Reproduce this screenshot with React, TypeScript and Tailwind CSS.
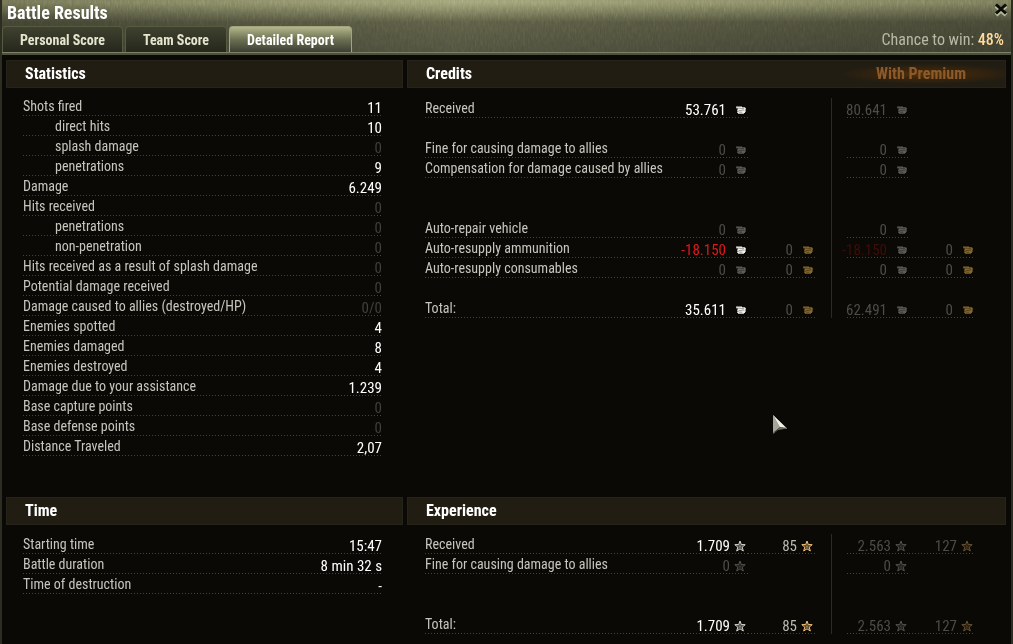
import React from "react";
import { clsx } from "clsx";

type Kind = "silver" | "gold" | "xp" | "freeXp";

type Amount = {
  value: string;
  kind: Kind;
  tone?: "bright" | "normal" | "dim" | "loss" | "dimLoss";
  lit?: boolean;
};

type Stat = { label: string; value: string; sub?: boolean; off?: boolean };

type LedgerRow = {
  label: string;
  main: Amount;
  extra?: Amount;
  premium: Amount;
  premiumExtra?: Amount;
};

const statistics: Stat[] = [
  { label: "Shots fired", value: "11" },
  { label: "direct hits", value: "10", sub: true },
  { label: "splash damage", value: "0", sub: true, off: true },
  { label: "penetrations", value: "9", sub: true },
  { label: "Damage", value: "6.249" },
  { label: "Hits received", value: "0", off: true },
  { label: "penetrations", value: "0", sub: true, off: true },
  { label: "non-penetration", value: "0", sub: true, off: true },
  { label: "Hits received as a result of splash damage", value: "0", off: true },
  { label: "Potential damage received", value: "0", off: true },
  { label: "Damage caused to allies (destroyed/HP)", value: "0/0", off: true },
  { label: "Enemies spotted", value: "4" },
  { label: "Enemies damaged", value: "8" },
  { label: "Enemies destroyed", value: "4" },
  { label: "Damage due to your assistance", value: "1.239" },
  { label: "Base capture points", value: "0", off: true },
  { label: "Base defense points", value: "0", off: true },
  { label: "Distance Traveled", value: "2,07" },
];

const time: Stat[] = [
  { label: "Starting time", value: "15:47" },
  { label: "Battle duration", value: "8 min 32 s" },
  { label: "Time of destruction", value: "-" },
];

const noSilver: Amount = { value: "0", kind: "silver", tone: "dim" };
const noGold: Amount = { value: "0", kind: "gold", tone: "dim" };

// null is an empty line between groups
const credits: (LedgerRow | null)[] = [
  {
    label: "Received",
    main: { value: "53.761", kind: "silver", tone: "bright", lit: true },
    premium: { value: "80.641", kind: "silver", tone: "dim" },
  },
  null,
  { label: "Fine for causing damage to allies", main: noSilver, premium: noSilver },
  { label: "Compensation for damage caused by allies", main: noSilver, premium: noSilver },
  null,
  null,
  { label: "Auto-repair vehicle", main: noSilver, premium: noSilver },
  {
    label: "Auto-resupply ammunition",
    main: { value: "-18.150", kind: "silver", tone: "loss", lit: true },
    extra: noGold,
    premium: { value: "-18.150", kind: "silver", tone: "dimLoss" },
    premiumExtra: noGold,
  },
  {
    label: "Auto-resupply consumables",
    main: noSilver,
    extra: noGold,
    premium: noSilver,
    premiumExtra: noGold,
  },
  null,
  {
    label: "Total:",
    main: { value: "35.611", kind: "silver", tone: "bright", lit: true },
    extra: noGold,
    premium: { value: "62.491", kind: "silver", tone: "dim" },
    premiumExtra: noGold,
  },
];

const xpAmounts = {
  main: { value: "1.709", kind: "xp", tone: "bright", lit: true },
  extra: { value: "85", kind: "freeXp", tone: "normal", lit: true },
  premium: { value: "2.563", kind: "xp", tone: "dim" },
  premiumExtra: { value: "127", kind: "freeXp", tone: "dim" },
} satisfies Record<string, Amount>;

const experience: (LedgerRow | null)[] = [
  { label: "Received", ...xpAmounts },
  {
    label: "Fine for causing damage to allies",
    main: { value: "0", kind: "xp", tone: "dim" },
    premium: { value: "0", kind: "xp", tone: "dim" },
  },
  null,
  null,
  { label: "Total:", ...xpAmounts },
];

const dotted =
  "bg-[repeating-linear-gradient(90deg,#44443c_0_1px,transparent_1px_3px)] bg-[length:100%_1px] bg-bottom bg-no-repeat";

const toneClass = {
  bright: "text-white",
  normal: "text-[#b9b9b0]",
  dim: "text-[#4c4c48]",
  loss: "text-[#e01a1a]",
  dimLoss: "text-[#3f0d09]",
};

const iconClass = {
  silver: ["text-[#5c5c58]", "text-[#f0f0ee]"],
  gold: ["text-[#86692a]", "text-[#e0b050]"],
  xp: ["text-[#54544f]", "text-[#d8d8d2]"],
  freeXp: ["text-[#6a5232]", "text-[#f8c47c]"],
};

const Coins = () => (
  <svg viewBox="0 0 10 10" className="h-2.5 w-2.5" fill="currentColor" aria-hidden="true">
    <path d="M0 1.500h6v.8h3.200v1H10v1.200h-.6V5.500h.4v1.200h-.8v1.200H8v.8H2V7.800H1V6.500h1.500V5.700H1V4.500h1V3.500H.5z" />
    <path d="M1.500 3.200H4l1 .4h3M3 5.500h2.500l1-.4h2M3.200 7.200h3" fill="none" stroke="#0a0a06" strokeOpacity=".6" strokeWidth=".6" />
  </svg>
);

const Star = () => (
  <svg viewBox="0 0 12 12" className="h-3 w-3" aria-hidden="true">
    <path
      d="m6 1 1.300 3.500 3.900.2-3 2.400 1.100 3.900L6 8.800 2.700 11l1.100-3.900-3-2.400 3.900-.2z"
      fill="currentColor"
      fillOpacity=".2"
      stroke="currentColor"
      strokeWidth="1"
    />
    <path d="M6 3.500v3M3.500 5.500 6 6.500l2.500-1M4.500 8.500 6 6.500l1.500 2" stroke="currentColor" strokeWidth=".4" fill="none" />
  </svg>
);

const AmountCell = ({ amount }: { amount?: Amount }) => {
  if (!amount) return <td />;
  const { value, kind, tone = "normal", lit } = amount;
  const star = kind === "xp" || kind === "freeXp";

  return (
    <td className={clsx("p-0 align-bottom", dotted)}>
      <div className={clsx("flex items-center justify-end pr-0.5", star ? "gap-1" : "gap-2.5")}>
        <span className={toneClass[tone]}>{value}</span>
        <span className={iconClass[kind][lit ? 1 : 0]}>{star ? <Star /> : <Coins />}</span>
      </div>
    </td>
  );
};

const PanelTitle = ({ children, premium }: { children: React.ReactNode; premium?: boolean }) => (
  <div className="flex h-7 items-center justify-between border border-[#26231a] bg-[#211d13] pl-[18px] text-[16px] font-bold text-white">
    <h2>{children}</h2>
    {premium && (
      <span className="flex h-full w-48 items-center justify-center bg-[radial-gradient(ellipse_at_60%_50%,#573408_0%,#3a250c_25%,#211d13_55%)] pl-6 text-[#8c5a2b]">
        With Premium
      </span>
    )}
  </div>
);

const RowLabel = ({ children, className }: { children: React.ReactNode; className?: string }) => (
  <th
    scope="row"
    className={clsx("p-0 pb-0.5 text-left align-bottom text-[14px] font-normal whitespace-nowrap text-[#c6c6be]", className)}
  >
    {children}
  </th>
);

const StatTable = ({ rows }: { rows: Stat[] }) => (
  <table className="w-full border-collapse leading-4">
    <tbody>
      {rows.map((row, i) => (
        <tr key={i} className={clsx("h-5", dotted)}>
          <RowLabel className={clsx(row.sub && "pl-8")}>{row.label}</RowLabel>
          <td className={clsx("p-0 text-right align-bottom", row.off ? "text-[#40403c]" : "text-white")}>
            {row.value}
          </td>
        </tr>
      ))}
    </tbody>
  </table>
);

const Ledger = ({ rows }: { rows: (LedgerRow | null)[] }) => (
  <table className="w-full table-fixed border-collapse leading-4">
    <colgroup>
      <col />
      <col className="w-16" />
      <col className="w-[67px]" />
      <col className="w-4" />
      <col className="w-4" />
      <col className="w-[62px]" />
      <col className="w-[66px]" />
    </colgroup>
    <tbody>
      {rows.map((row, i) => (
        <tr key={i} className="h-5">
          {row ? (
            <>
              <RowLabel className={dotted}>{row.label}</RowLabel>
              <AmountCell amount={row.main} />
              <AmountCell amount={row.extra} />
            </>
          ) : (
            <td colSpan={3} />
          )}
          <td />
          <td className="border-l border-[#2b2b25]" />
          <AmountCell amount={row?.premium} />
          <AmountCell amount={row?.premiumExtra} />
        </tr>
      ))}
    </tbody>
  </table>
);

const Tab = ({ label, active }: { label: string; active?: boolean }) => (
  <button
    type="button"
    role="tab"
    aria-selected={!!active}
    className={clsx(
      "h-[26px] rounded-t-sm border border-b-0 px-[17px] text-[14px] leading-5 font-bold",
      active
        ? "border-[#a2a67c] bg-linear-to-b from-[#b4b78c] via-[#6d7152] to-[#3c3f33] text-white"
        : "border-[#565a3f] bg-linear-to-b from-[#3f422f] to-[#25271c] text-[#e6e5cf]"
    )}
  >
    {label}
  </button>
);

// brushed metal grain over the title bar
const Grain = () => (
  <svg className="absolute inset-0 h-full w-full opacity-30 mix-blend-overlay" aria-hidden="true">
    <filter id="grain">
      <feTurbulence type="fractalNoise" baseFrequency="0.6 0.15" numOctaves="3" seed="4" />
      <feColorMatrix type="saturate" values="0" />
    </filter>
    <rect width="100%" height="100%" filter="url(#grain)" />
  </svg>
);

export default function App() {
  return (
    <main className="min-h-screen overflow-hidden border-x-2 border-[#2c2e22] bg-[#0a0905] font-['Liberation_Sans_Narrow','Roboto_Condensed','Liberation_Sans',sans-serif] text-[15px]">
      <header className="relative bg-linear-to-b from-[#a0a377] from-5% via-[#5c5d45] via-40% to-[#4e4f3d]">
        <div className="absolute inset-0 bg-linear-to-r from-black/30 via-transparent via-45% to-black/25" />
        <Grain />
        <div className="relative">
          <div className="flex h-[26px] items-center justify-between pr-0.5 pl-[5px]">
            <h1 className="text-[18px] leading-6 font-bold text-white">Battle Results</h1>
            <button type="button" aria-label="Close" className="flex h-4 w-4 items-center justify-center self-start pt-1">
              <svg viewBox="0 0 14 14" className="h-3.5 w-3.5" fill="none" aria-hidden="true">
                <path d="m2 3 10 9M12 3 2 12" stroke="#b9bca0" strokeWidth="4" />
                <path d="m2 1.500 10 9M12 1.500l-10 9" stroke="#0c0c08" strokeWidth="3" />
              </svg>
            </button>
          </div>
          <div className="flex items-end justify-between pr-[7px]">
            <div role="tablist" className="flex gap-0.5">
              <Tab label="Personal Score" />
              <Tab label="Team Score" />
              <Tab label="Detailed Report" active />
            </div>
            <p className="pb-0.5 text-[16px] leading-5 text-[#b8baa6]">
              Chance to win: <span className="font-medium text-[#ffdb9c]">48%</span>
            </p>
          </div>
          <div className="h-[3px] border-t border-[#7d8168] bg-[#4d503d]" />
        </div>
      </header>

      <div className="grid grid-cols-[397fr_599fr] gap-x-1 pt-[5px] pr-[5px] pl-1">
        <section className="min-h-[437px]">
          <PanelTitle>Statistics</PanelTitle>
          <div className="pt-2 pr-[21px] pl-[17px]">
            <StatTable rows={statistics} />
          </div>
        </section>
        <section>
          <PanelTitle premium>Credits</PanelTitle>
          <div className="pt-2.5 pr-[31px] pl-[18px]">
            <Ledger rows={credits} />
          </div>
        </section>
        <section>
          <PanelTitle>Time</PanelTitle>
          <div className="pt-[9px] pr-[21px] pl-[17px]">
            <StatTable rows={time} />
          </div>
        </section>
        <section>
          <PanelTitle>Experience</PanelTitle>
          <div className="pt-[9px] pr-[31px] pl-[18px]">
            <Ledger rows={experience} />
          </div>
        </section>
      </div>

      <svg viewBox="0 0 16 20" className="absolute top-[414px] left-[772px] h-5 w-4" aria-hidden="true">
        <path d="M1 1v19l5-4 9-1.500z" fill="#77776b" />
        <path d="M1 1 15 14.500 8 13.500z" fill="#f0f0e8" />
        <path d="m1 1 7 12.500L1 18z" fill="#a5a599" />
        <path d="m8 13.500-5 4.500M8 13.500l6 .7" stroke="#33332b" strokeWidth=".8" />
      </svg>
    </main>
  );
}
